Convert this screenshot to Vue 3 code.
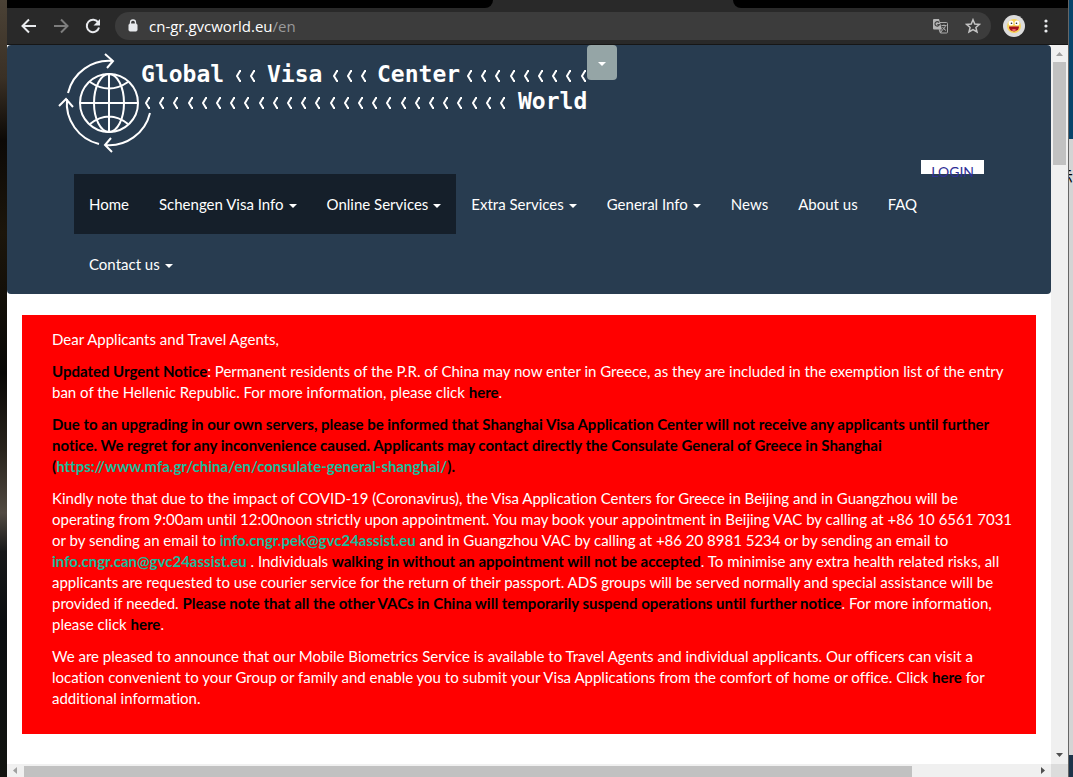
<script setup>
const menu = [
  { label: 'Home', active: true },
  { label: 'Schengen Visa Info', caret: true, active: true },
  { label: 'Online Services', caret: true, active: true },
  { label: 'Extra Services', caret: true },
  { label: 'General Info', caret: true },
  { label: 'News' },
  { label: 'About us' },
  { label: 'FAQ' },
  { label: 'Contact us', caret: true },
]

const chevron = (x, y) => `M${x + 6} ${y - 5}h-1l-3 5l3 5h1`
const run = (start, count, y) =>
  Array.from({ length: count }, (_, i) => chevron(start + Math.round(i * 14.2), y)).join('')
const chevrons = [run(176, 2, 31), run(273, 3, 31), run(407, 9, 31), run(85, 26, 58)].join('')
</script>

<template>
  <div class="desktop">
    <div class="backdrop-left"></div>
    <div class="window">
      <div class="tabs">
        <div class="tab-left"></div>
        <div class="tab-right"></div>
      </div>
      <div class="toolbar">
        <button class="tool" aria-label="Back">
          <svg width="16" height="16" viewBox="0 0 16 16" fill="none" stroke="#e8eaed" stroke-width="2"><path d="M15 8H2M8 1.500L1.500 8L8 14.500" /></svg>
        </button>
        <button class="tool" aria-label="Forward">
          <svg width="16" height="16" viewBox="0 0 16 16" fill="none" stroke="#7d7d7d" stroke-width="2"><path d="M1 8h13M8 1.500L14.500 8L8 14.500" /></svg>
        </button>
        <button class="tool" aria-label="Reload">
          <svg width="16" height="16" viewBox="0 0 16 16"><path d="M13.300 4.700A6.200 6.200 0 1 0 14 9.500" fill="none" stroke="#e8eaed" stroke-width="2" /><path d="M15 1v6.500H8.500z" fill="#e8eaed" /></svg>
        </button>
        <div class="address">
          <svg width="10" height="14" viewBox="0 0 10 14"><rect x="1" y="5" width="8" height="7" rx="1" fill="#e8eaed" stroke="#e8eaed" /><path d="M2.500 5V3.500a2.500 2.500 0 0 1 5 0V5" fill="none" stroke="#e8eaed" stroke-width="1.300" /></svg>
          <a class="url" href="#">cn-gr.gvcworld.eu<span>/en</span></a>
          <button class="tool" aria-label="Translate">
            <svg width="15" height="15" viewBox="0 0 15 15"><path d="M5.500 3.500h8a1 1 0 0 1 1 1v8.500a1 1 0 0 1-1 1H7.500z" fill="#3c3c3c" stroke="#aaa" /><path d="M1 0h5l3 10.500H1a1 1 0 0 1-1-1V1a1 1 0 0 1 1-1z" fill="#b5b5b5" /><path d="M6 3.600A2.200 2.200 0 1 0 6.300 5.500H4.300" fill="none" stroke="#444" stroke-width="1.200" /><path d="M8.500 6.500h5M11 5.500v1M12.500 6.500c-.5 2-1.700 3.500-3 4.500M9.500 8c.8 1.500 2 2.700 3.500 3.500M6 10.500L7.500 14l2-3.500" fill="none" stroke="#aaa" /></svg>
          </button>
          <button class="tool" aria-label="Bookmark this page">
            <svg width="16" height="16" viewBox="0 0 16 16"><path d="M8 1.700l1.800 4.300 4.600.4-3.500 3 1.100 4.600L8 11.600 4 14l1.100-4.600-3.500-3 4.600-.4z" fill="none" stroke="#c4c4c4" stroke-width="1.500" /></svg>
          </button>
        </div>
        <button class="tool avatar" aria-label="Profile">
          <svg width="22" height="22" viewBox="0 0 22 22"><circle cx="11" cy="11" r="11" fill="#dcdcdc" /><circle cx="11" cy="11" r="7" fill="#f7d35a" /><circle cx="8" cy="8" r="2.500" fill="#fff" /><circle cx="14" cy="8" r="2.500" fill="#fff" /><circle cx="8.500" cy="8.300" r=".8" fill="#222" /><circle cx="13.500" cy="8.300" r=".8" fill="#222" /><path d="M6 11.500h10c0 6.500-10 6.500-10 0z" fill="#a5121c" /><path d="M8.500 15c1.500-1.300 3.500-1.300 5 0-1.500 1.500-3.500 1.500-5 0z" fill="#f06a70" /></svg>
        </button>
        <button class="tool" aria-label="Menu">
          <svg width="4" height="14" viewBox="0 0 4 14" fill="#e8eaed"><circle cx="2" cy="2" r="1.600" /><circle cx="2" cy="7" r="1.600" /><circle cx="2" cy="12" r="1.600" /></svg>
        </button>
      </div>

      <div class="viewport">
        <div class="page">
          <header class="site-header">
            <div class="container">
              <div class="brand-row">
                <svg class="logo" width="528" height="115" viewBox="0 0 528 115" role="img" aria-label="Global Visa Center World">
                  <g fill="none" stroke="#fff" stroke-width="2">
                    <circle cx="50" cy="58" r="29" />
                    <ellipse cx="50" cy="58" rx="15" ry="29" />
                    <path d="M50 29V87M21 58H79M31 37Q50 50 69 37M31 79Q50 64 69 79" />
                    <path d="M9 48A42 42 0 0 1 54 16M46 9L54 16L48 23" />
                    <path d="M40 99A42 42 0 0 1 8 54M0 61L7 54L14 62" />
                    <path d="M91 68A42 42 0 0 1 46 100M52 93L46 100L53 107" />
                    <path :d="chevrons" />
                  </g>
                  <g class="wordmark">
                    <text x="82" y="37">Global</text>
                    <text x="208" y="37">Visa</text>
                    <text x="318" y="37">Center</text>
                    <text x="459" y="64">World</text>
                  </g>
                </svg>
                <button class="toggle" aria-label="Choose language"><span class="caret"></span></button>
              </div>
              <div class="login-row"><a class="login" href="#">LOGIN</a></div>
              <nav class="menu">
                <a v-for="item in menu" :key="item.label" href="#" :class="{ active: item.active }">{{ item.label }}<span v-if="item.caret" class="caret"></span></a>
              </nav>
            </div>
          </header>

          <main class="notice">
            <p>Dear Applicants and Travel Agents,</p>
            <p><strong>Updated Urgent Notice</strong>: Permanent residents of the P.R. of China may now enter in Greece, as they are included in the exemption list of the entry ban of the Hellenic Republic. For more information, please click <a class="dark" href="#">here</a>.</p>
            <p><strong>Due to an upgrading in our own servers, please be informed that Shanghai Visa Application Center will not receive any applicants until further notice. We regret for any inconvenience caused. Applicants may contact directly the Consulate General of Greece in Shanghai (<a href="#">https://www.mfa.gr/china/en/consulate-general-shanghai/</a>).</strong></p>
            <p>Kindly note that due to the impact of COVID-19 (Coronavirus), the Visa Application Centers for Greece in Beijing and in Guangzhou will be operating from 9:00am until 12:00noon strictly upon appointment. You may book your appointment in Beijing VAC by calling at +86 10 6561 7031 or by sending an email to <a href="#">info.cngr.pek@gvc24assist.eu</a> and in Guangzhou VAC by calling at +86 20 8981 5234 or by sending an email to <a href="#">info.cngr.can@gvc24assist.eu</a> . Individuals <strong>walking in without an appointment will not be accepted</strong>. To minimise any extra health related risks, all applicants are requested to use courier service for the return of their passport. ADS groups will be served normally and special assistance will be provided if needed. <strong>Please note that all the other VACs in China will temporarily suspend operations until further notice</strong>. For more information, please click <a class="dark" href="#">here</a>.</p>
            <p>We are pleased to announce that our Mobile Biometrics Service is available to Travel Agents and individual applicants. Our officers can visit a location convenient to your Group or family and enable you to submit your Visa Applications from the comfort of home or office. Click <a class="dark" href="#">here</a> for additional information.</p>
          </main>
        </div>
        <div class="vbar">
          <svg width="7" height="4" viewBox="0 0 7 4"><path d="M0 4L3.500 0L7 4z" fill="#a0a0a0" /></svg>
          <div class="vthumb"></div>
          <svg class="down" width="7" height="4" viewBox="0 0 7 4"><path d="M0 0L3.500 4L7 0z" fill="#505050" /></svg>
        </div>
      </div>
      <div class="hbar">
        <svg width="4" height="7" viewBox="0 0 4 7"><path d="M4 0L0 3.500L4 7z" fill="#a0a0a0" /></svg>
        <div class="track"><div class="hthumb"></div></div>
        <svg width="4" height="7" viewBox="0 0 4 7"><path d="M0 0L4 3.500L0 7z" fill="#505050" /></svg>
        <div class="corner"></div>
      </div>
    </div>
    <div class="backdrop-right">
      <div class="sky"></div>
      <div class="sheet">示</div>
      <div class="night"></div>
    </div>
  </div>
</template>

<style>
body {
  margin: 0;
  overflow: hidden;
}
</style>

<style scoped>
.desktop {
  display: grid;
  grid-template-columns: 7px minmax(0, 1fr) 5px;
  height: 100vh;
  overflow: hidden;
  font-family: Lato, "Liberation Sans", sans-serif;
  font-size: 15px;
  line-height: 21px;
  font-variant-ligatures: none;
}
.backdrop-left {
  background: linear-gradient(#4b4236 0%, #3a3025 10%, #0c0906 18%, #1c160b 30%, #080705 48%, #29241d 58%, #514a42 66%, #171819 71%, #0a0d10 80%, #121410 100%);
}
.window {
  display: flex;
  flex-direction: column;
  min-width: 0;
  min-height: 0;
  background: #fff;
}
.tabs {
  display: flex;
  flex: none;
  gap: 240px;
  height: 8px;
  background: #292929;
}
.tab-left {
  width: 486px;
  border-radius: 0 0 8px 0;
  background: #000;
}
.tab-right {
  flex: 1;
  border-radius: 0 0 0 8px;
  background: #000;
}
.toolbar {
  display: flex;
  flex: none;
  align-items: center;
  gap: 16px;
  height: 36px;
  padding: 0 20px 0 14px;
  background: #292929;
  border-bottom: 1px solid #161616;
}
.tool {
  display: flex;
  padding: 0;
  border: 0;
  background: none;
}
.avatar {
  margin-right: 3px;
}
.address {
  display: flex;
  flex: 1;
  align-items: center;
  gap: 17px;
  height: 28px;
  padding: 0 10px 0 13px;
  margin: 0 -4px 0 -2px;
  border-radius: 14px;
  background: #3c3c3c;
}
.url {
  flex: 1;
  margin-left: -6px;
  font-family: "Open Sans", "Noto Sans", sans-serif;
  font-size: 15px;
  color: #fff;
  text-decoration: none;
}
.url span {
  color: #9a9a9a;
}
.viewport {
  display: flex;
  flex: 1;
  min-height: 0;
}
.page {
  flex: 1;
  min-width: 0;
  overflow: hidden;
}
.site-header {
  border-radius: 4px;
  background: #283c50;
}
.container {
  max-width: 910px;
  padding: 0 30px;
  margin: 0 auto;
}
.brand-row {
  display: flex;
  align-items: flex-start;
  margin-left: -15px;
}
.logo {
  overflow: visible;
}
.wordmark {
  fill: #fff;
  font-family: "DejaVu Sans Mono", monospace;
  font-size: 23px;
  font-weight: 700;
}
.toggle {
  display: flex;
  align-items: center;
  justify-content: center;
  width: 30px;
  height: 35px;
  padding: 0;
  border: 0;
  border-radius: 4px;
  background: #95a5a6;
  color: #fff;
  z-index: 1;
}
.toggle .caret {
  margin: 2px 0 0;
}
.caret {
  display: inline-block;
  margin-left: 5px;
  vertical-align: middle;
  border-top: 4px solid;
  border-right: 4px solid transparent;
  border-left: 4px solid transparent;
}
.login-row {
  display: flex;
  justify-content: flex-end;
}
.login {
  height: 14px;
  padding: 0 10px;
  background: #fff;
  color: #2f2f96;
  font-size: 14px;
  line-height: 24px;
  text-decoration: none;
}
.menu {
  display: flex;
  flex-wrap: wrap;
}
.menu a {
  padding: 20px 15px 19px;
  color: #fff;
  text-decoration: none;
}
.menu a.active {
  background: #151f2a;
}
.notice {
  padding: 14px 18px 14px 30px;
  margin: 21px 15px;
  background: #f00;
  color: #fff;
}
.notice p {
  margin: 0 0 11px;
}
.notice strong {
  color: #000;
  font-weight: 700;
}
.notice a {
  color: #18bc9c;
  font-weight: 700;
  text-decoration: none;
}
.notice a.dark {
  color: #000;
}
.vbar {
  display: flex;
  flex: none;
  flex-direction: column;
  align-items: center;
  width: 17px;
  padding: 7px 0;
  box-sizing: border-box;
  background: #f0f0f0;
}
.vthumb {
  width: 13px;
  height: 103px;
  margin-top: 6px;
  background: #c1c1c1;
}
.down {
  margin-top: auto;
}
.hbar {
  display: flex;
  flex: none;
  align-items: center;
  height: 13px;
  padding-left: 6px;
  background: #f0f0f0;
}
.track {
  flex: 1;
  height: 11px;
  margin: 2px 8px 0 7px;
}
.hthumb {
  width: 88%;
  height: 11px;
  background: #c1c1c1;
}
.corner {
  width: 17px;
  height: 13px;
  margin-left: 6px;
  background: #dcdcdc;
}
.backdrop-right {
  display: flex;
  flex-direction: column;
  overflow: hidden;
  border-left: 1px solid #666;
}
.sky {
  height: 139px;
  background: #07446b;
}
.sheet {
  display: flex;
  flex: 1;
  justify-content: flex-end;
  padding-top: 26px;
  background: #d4d4d4;
  font-family: "Noto Sans CJK SC", sans-serif;
  color: #000;
}
.night {
  height: 22px;
  background: #1d3349;
}
</style>
